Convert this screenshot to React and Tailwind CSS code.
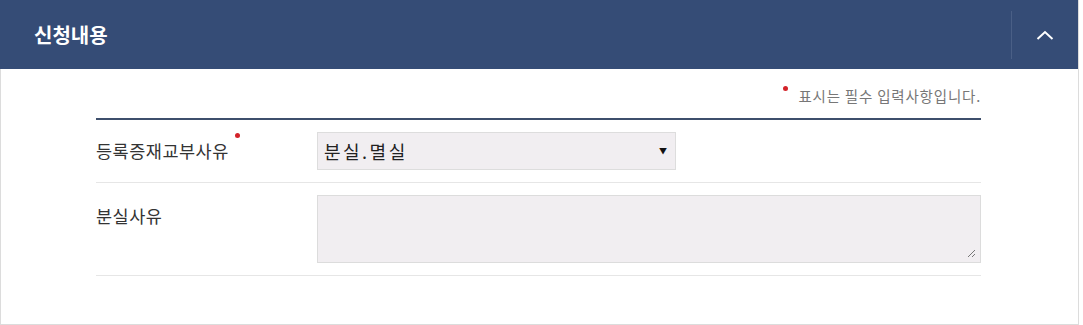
import React from 'react'

const font = { fontFamily: '"Noto Sans CJK KR", "Noto Sans", sans-serif' }

const Field = ({ label, required, children, align = 'items-center', h, labelPad = '' }) => {
  return (
    <div className={`flex ${align} ${h} border-b border-[#e6e6e6]`}>
      <div className={`w-[221px] shrink-0 text-[17.5px] tracking-[0.5px] text-[#333] ${labelPad}`}>
        <span className="relative">
          {label}
          {required && (
            <span className="absolute -right-[11px] -top-[5px] h-[5px] w-[5px] rounded-full bg-[#d3232a]"></span>
          )}
        </span>
      </div>
      {children}
    </div>
  )
}

const App = () => {
  return (
    <div className="w-[1083px] h-[325px] bg-white" style={font}>
      <div className="w-[1079px] h-[325px] border-l border-r border-b border-[#dcdcdc]">
        <div className="-ml-px flex h-[69px] items-center bg-[#354c76]">
          <h2 className="flex-1 pl-[34px] text-[20px] font-bold text-white">신청내용</h2>
          <div className="h-[48px] w-px bg-[#4a5f86]"></div>
          <button className="flex h-full w-[66px] items-center justify-center">
            <svg width="18" height="10" viewBox="0 0 18 10" fill="none">
              <path d="M1.5 9 L9 2 L16.5 9" stroke="white" strokeWidth="2" />
            </svg>
          </button>
        </div>

        <div className="ml-[95px] w-[885px]">
          <div className="flex h-[49px] items-end justify-end pb-[15px] text-[14.5px] text-[#777]">
            <span className="relative mr-[10px] -top-[12px] h-[5px] w-[5px] rounded-full bg-[#d3232a]"></span>
            <span className="leading-none tracking-[0.8px]">표시는 필수 입력사항입니다.</span>
          </div>
          <div className="h-[2px] bg-[#3e4f6c]"></div>

          <Field label="등록증재교부사유" required h="h-[63px]">
            <div className="flex h-[38px] w-[359px] items-center justify-between border border-[#dddddd] bg-[#f1eef1] pl-[6px] pr-[8px] text-[18px] text-[#222]">
              <span className="tracking-[2.5px]">분실.멸실</span>
              <span className="text-[8px] text-[#111]">▼</span>
            </div>
          </Field>

          <Field label="분실사유" align="items-start" h="h-[93px]" labelPad="pt-[20px]">
            <div className="flex w-full flex-col pt-[12px]">
              <div className="relative h-[68px] w-full border border-[#dcdcdc] bg-[#f1eef1]">
                <svg className="absolute bottom-[4px] right-[4px]" width="9" height="9" viewBox="0 0 9 9">
                  <path d="M8 1 L1 8 M8 5 L5 8" stroke="#777" strokeWidth="1" />
                </svg>
              </div>
            </div>
          </Field>
        </div>
      </div>
    </div>
  )
}

export default App
